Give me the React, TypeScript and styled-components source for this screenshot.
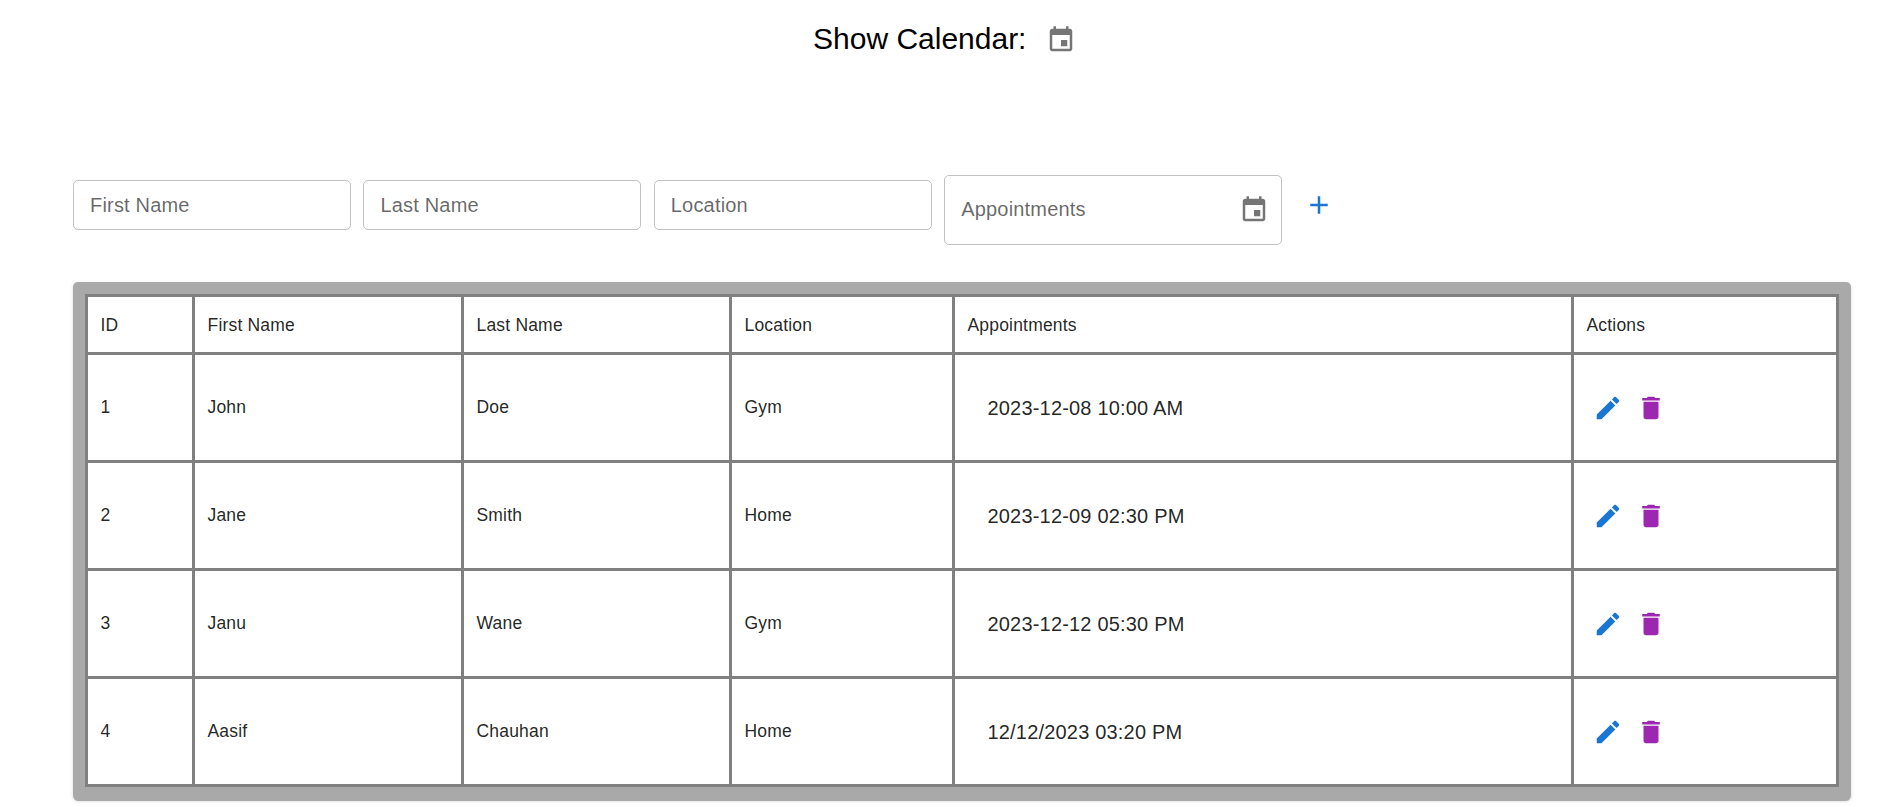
import React from "react";
import styled, { createGlobalStyle } from "styled-components";

const GlobalStyle = createGlobalStyle`
  * { box-sizing: border-box; }
  body {
    margin: 0;
    background: #fff;
    font-family: "Liberation Sans", Arial, Helvetica, sans-serif;
    color: rgba(0, 0, 0, 0.87);
  }
`;

const Page = styled.main`
  display: flex;
  flex-direction: column;
  height: 807px;
  overflow: hidden;
`;

const Heading = styled.header`
  display: flex;
  align-items: flex-start;
  height: 175px;
  padding: 21px 0 0 813px;
`;

const Title = styled.h1`
  width: 233.25px;
  margin: 0;
  font-size: 30px;
  font-weight: 400;
  line-height: 35px;
  color: #000;
  white-space: nowrap;
`;

const Button = styled.button<{ $color: string }>`
  display: block;
  flex: none;
  width: 30px;
  height: 30px;
  padding: 0;
  border: 0;
  background: none;
  color: ${(p) => p.$color};
  cursor: pointer;

  svg {
    display: block;
    width: 30px;
    height: 30px;
    fill: currentColor;
  }
`;

const HeadingAction = styled.div`
  padding-top: 3.75px;
`;

const Form = styled.form`
  display: flex;
  align-items: flex-start;
  gap: 12.5px;
  height: 107px;
  padding-left: 73px;
`;

const Field = styled.div<{ $large?: boolean }>`
  display: flex;
  align-items: center;
  width: ${(p) => (p.$large ? 338 : 277.9)}px;
  height: ${(p) => (p.$large ? 70 : 50)}px;
  margin-top: ${(p) => (p.$large ? 0 : 5)}px;
  padding: 0 12px 0 16px;
  border: 1px solid rgba(0, 0, 0, 0.24);
  border-radius: 5px;
`;

const Input = styled.input<{ $raised?: boolean }>`
  flex: 1;
  min-width: 0;
  height: 30px;
  margin-bottom: ${(p) => (p.$raised ? 2 : 0)}px;
  padding: 0;
  border: 0;
  outline: 0;
  background: none;
  font: 400 20px/30px "Liberation Sans", Arial, sans-serif;
  letter-spacing: 0.00938em;

  &::placeholder {
    color: rgba(0, 0, 0, 0.6);
    opacity: 1;
  }
`;

const AddAction = styled.div`
  padding: 15px 0 0 9.6px;
`;

const Paper = styled.section`
  width: 1778px;
  height: 518px;
  margin-left: 73px;
  padding: 12px;
  border-radius: 5px;
  background: #a9a9a9;
  box-shadow: 0 2px 1px -1px rgba(0, 0, 0, 0.2), 0 1px 1px rgba(0, 0, 0, 0.14),
    0 1px 4px rgba(0, 0, 0, 0.12);
`;

const Table = styled.table`
  width: 1754px;
  table-layout: fixed;
  border-collapse: separate;
  border-spacing: 3px;
  background: #808080;
`;

const Column = styled.col<{ $width: number }>`
  width: ${(p) => p.$width}px;
`;

const HeaderCell = styled.th`
  height: 55px;
  padding: 0 12.5px;
  background: #fff;
  font-size: 17.5px;
  font-weight: 400;
  line-height: 30px;
  letter-spacing: 0.01071em;
  text-align: left;
`;

const Cell = styled.td`
  height: 105px;
  padding: 0 12.5px;
  background: #fff;
  font-size: 17.5px;
  line-height: 25px;
  letter-spacing: 0.01071em;
`;

const DateCell = styled(Cell)`
  padding: 1px 0 0 32.5px;
  font-size: 20px;
  letter-spacing: 0.00938em;
`;

const ActionGroup = styled.div`
  display: flex;
  gap: 13px;
  padding: 1px 0 0 6.5px;
`;

const icons = {
  calendar:
    "M17 12h-5v5h5v-5zM16 1v2H8V1H6v2H5c-1.11 0-1.99.9-1.99 2L3 19c0 1.1.89 2 2 2h14c1.1 0 2-.9 2-2V5c0-1.1-.9-2-2-2h-1V1h-2zm3 18H5V8h14v11z",
  add: "M19 13h-6v6h-2v-6H5v-2h6V5h2v6h6v2z",
  edit: "M3 17.25V21h3.75L17.81 9.94l-3.75-3.75L3 17.25zM20.71 7.04c.39-.39.39-1.02 0-1.41l-2.34-2.34c-.39-.39-1.02-.39-1.41 0l-1.83 1.83 3.75 3.75 1.83-1.83z",
  remove:
    "M6 19c0 1.1.9 2 2 2h8c1.1 0 2-.9 2-2V7H6v12zM19 4h-3.5l-1-1h-5l-1 1H5v2h14V4z",
};

interface IconButtonProps {
  icon: keyof typeof icons;
  color: string;
  label: string;
}

function IconButton({ icon, color, label }: IconButtonProps) {
  return (
    <Button type="button" $color={color} aria-label={label}>
      <svg viewBox="0 0 24 24" aria-hidden="true">
        <path d={icons[icon]} />
      </svg>
    </Button>
  );
}

const columns = [
  { title: "ID", width: 104 },
  { title: "First Name", width: 266 },
  { title: "Last Name", width: 265 },
  { title: "Location", width: 220 },
  { title: "Appointments", width: 616 },
  { title: "Actions", width: 262 },
];

const people = [
  { id: 1, first: "John", last: "Doe", location: "Gym", date: "2023-12-08 10:00 AM" },
  { id: 2, first: "Jane", last: "Smith", location: "Home", date: "2023-12-09 02:30 PM" },
  { id: 3, first: "Janu", last: "Wane", location: "Gym", date: "2023-12-12 05:30 PM" },
  { id: 4, first: "Aasif", last: "Chauhan", location: "Home", date: "12/12/2023 03:20 PM" },
];

const GREY = "#757575";
const BLUE = "#1976d2";
const PURPLE = "#9c27b0";

export default function App() {
  return (
    <>
      <GlobalStyle />
      <Page>
        <Heading>
          <Title>Show Calendar:</Title>
          <HeadingAction>
            <IconButton icon="calendar" color={GREY} label="Show calendar" />
          </HeadingAction>
        </Heading>
        <Form>
          {["First Name", "Last Name", "Location"].map((name) => (
            <Field key={name}>
              <Input placeholder={name} />
            </Field>
          ))}
          <Field $large>
            <Input $raised placeholder="Appointments" />
            <IconButton icon="calendar" color={GREY} label="Choose date" />
          </Field>
          <AddAction>
            <IconButton icon="add" color={BLUE} label="Add" />
          </AddAction>
        </Form>
        <Paper>
          <Table>
            <colgroup>
              {columns.map((c) => (
                <Column key={c.title} $width={c.width} />
              ))}
            </colgroup>
            <thead>
              <tr>
                {columns.map((c) => (
                  <HeaderCell key={c.title}>{c.title}</HeaderCell>
                ))}
              </tr>
            </thead>
            <tbody>
              {people.map((p) => (
                <tr key={p.id}>
                  <Cell>{p.id}</Cell>
                  <Cell>{p.first}</Cell>
                  <Cell>{p.last}</Cell>
                  <Cell>{p.location}</Cell>
                  <DateCell>{p.date}</DateCell>
                  <Cell>
                    <ActionGroup>
                      <IconButton icon="edit" color={BLUE} label="Edit" />
                      <IconButton icon="remove" color={PURPLE} label="Delete" />
                    </ActionGroup>
                  </Cell>
                </tr>
              ))}
            </tbody>
          </Table>
        </Paper>
      </Page>
    </>
  );
}
